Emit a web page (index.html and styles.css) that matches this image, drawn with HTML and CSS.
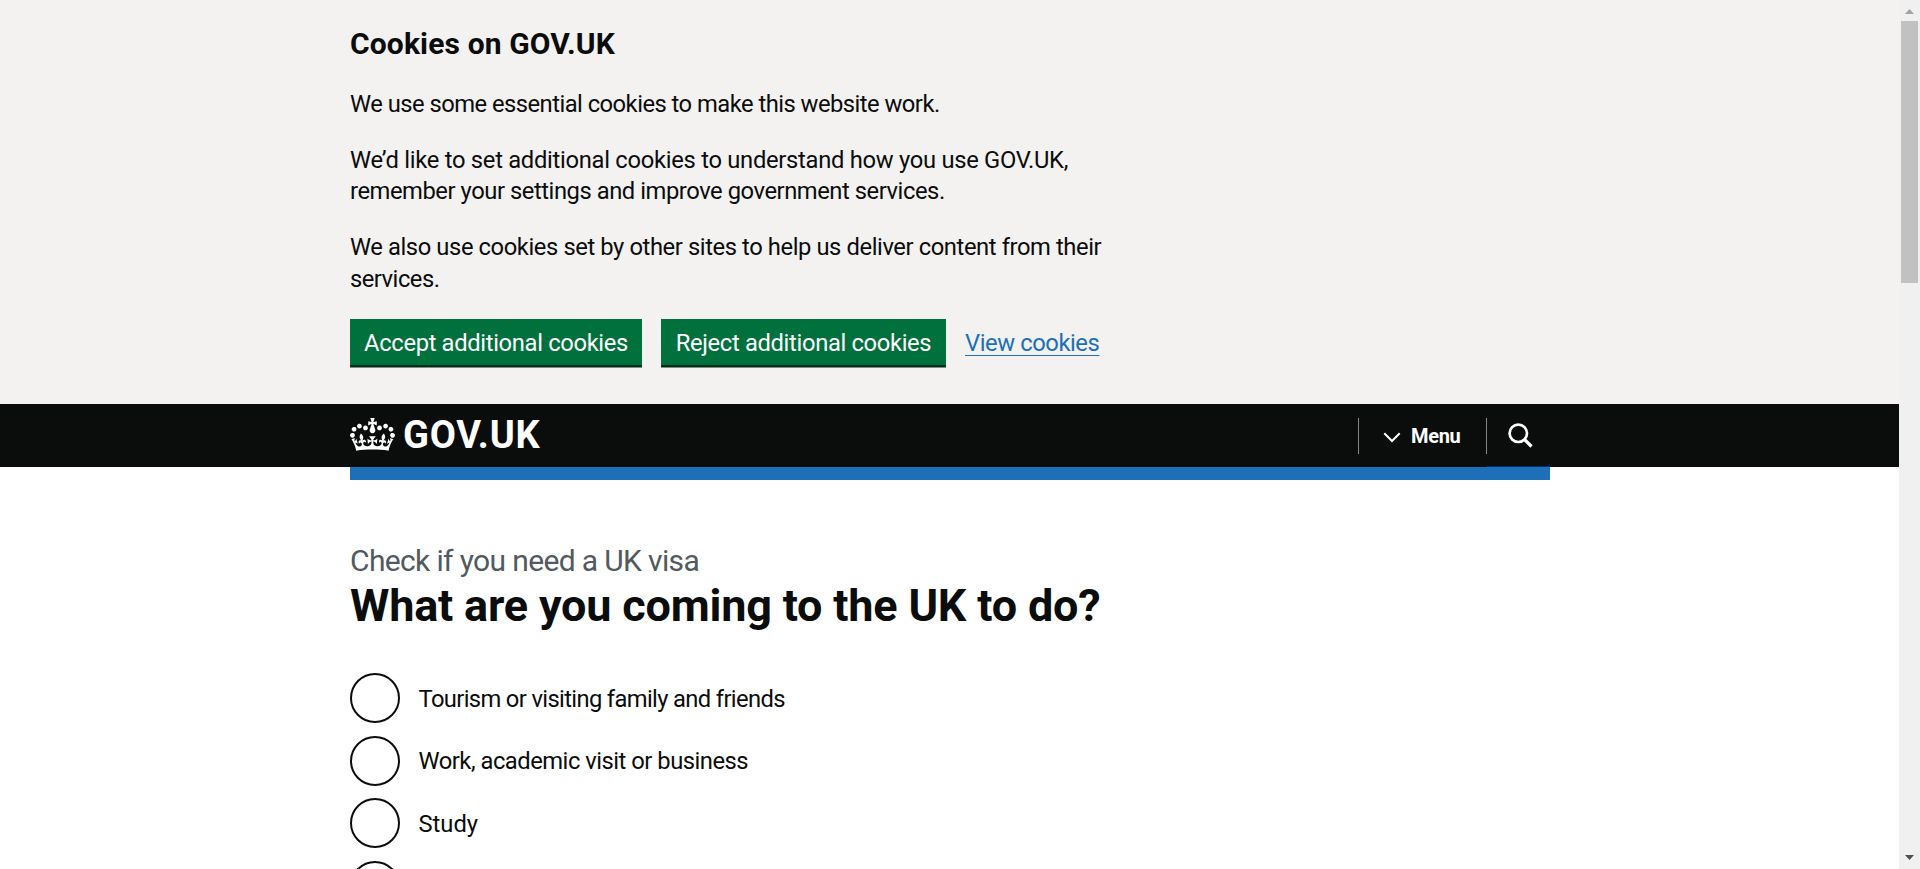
FILE: index.html
```html
<!DOCTYPE html>
<html lang="en">
<head>
<meta charset="utf-8">
<title>What are you coming to the UK to do? - GOV.UK</title>
<link rel="stylesheet" href="styles.css">
</head>
<body>
<div class="viewport">
  <div class="page">
    <section class="cookie-banner">
      <div class="container">
        <h2 class="cookie-title"><span class="t-title">Cookies on GOV.UK</span></h2>
        <p class="body"><span class="t-1">We use some essential cookies to make this website work.</span></p>
        <p class="body"><span class="t-2">We’d like to set additional cookies to understand how you use GOV.UK,</span><br><span class="t-3">remember your settings and improve government services.</span></p>
        <p class="body"><span class="t-4">We also use cookies set by other sites to help us deliver content from their</span><br><span class="t-5">services.</span></p>
        <div class="button-group">
          <button class="button accept">Accept additional cookies</button>
          <button class="button reject">Reject additional cookies</button>
          <a class="link">View cookies</a>
        </div>
      </div>
    </section>
    <header class="header">
      <div class="container header-row">
        <a class="logo">
          <svg class="crown" viewBox="0 0 132 97" fill="currentColor"><path fill-rule="evenodd" d="M25 30.2c3.5 1.5 7.7-.2 9.1-3.7 1.5-3.6-.2-7.8-3.9-9.2-3.6-1.4-7.6.3-9.1 3.9-1.4 3.5.3 7.5 3.9 9zM9 39.5c3.6 1.5 7.8-.2 9.2-3.7 1.5-3.6-.2-7.8-3.9-9.1-3.6-1.5-7.6.2-9.1 3.8-1.4 3.5.3 7.5 3.8 9zM4.4 57.2c3.5 1.5 7.7-.2 9.1-3.8 1.5-3.6-.2-7.7-3.9-9.1-3.5-1.5-7.6.3-9.1 3.8-1.4 3.5.3 7.6 3.9 9.1zm38.3-21.4c3.5 1.5 7.7-.2 9.1-3.8 1.5-3.6-.2-7.7-3.9-9.1-3.6-1.5-7.6.3-9.1 3.8-1.3 3.6.4 7.7 3.9 9.1zm64.4-5.6c-3.6 1.5-7.8-.2-9.1-3.7-1.5-3.6.2-7.8 3.8-9.2 3.6-1.4 7.7.3 9.2 3.9 1.3 3.5-.4 7.5-3.9 9zm15.9 9.3c-3.6 1.5-7.7-.2-9.1-3.7-1.5-3.6.2-7.8 3.7-9.1 3.6-1.5 7.7.2 9.2 3.8 1.5 3.5-.3 7.5-3.8 9zm4.7 17.7c-3.6 1.5-7.8-.2-9.2-3.8-1.5-3.6.2-7.7 3.9-9.1 3.6-1.5 7.7.3 9.2 3.8 1.3 3.5-.4 7.6-3.9 9.1zM89.3 35.8c-3.6 1.5-7.8-.2-9.2-3.8-1.4-3.6.2-7.7 3.9-9.1 3.6-1.5 7.7.3 9.2 3.8 1.4 3.6-.3 7.7-3.9 9.1zM69.7 17.7l8.9 4.7V9.3l-8.9 2.8c-.2-.3-.5-.6-.9-.9L72.4 0H59.6l3.5 11.2c-.3.3-.6.5-.9.9l-8.8-2.8v13.1l8.8-4.7c.3.3.6.7.9.9l-5 15.4v.1c-.2.8-.4 1.6-.4 2.4 0 4.1 3.1 7.5 7 8.1h.2c.3 0 .7.1 1 .1.4 0 .7 0 1-.1h.2c4-.6 7.1-4.1 7.1-8.1 0-.8-.1-1.7-.4-2.4V34l-5.1-15.4c.4-.2.7-.6 1-.9zM66 92.8c16.9 0 32.8 1.1 47.1 3.2 4-16.9 8.9-26.7 14-33.5l-9.6-3.4c1 4.9 1.1 7.2 0 10.2-1.5-1.4-3-4.3-4.2-8.7L108.6 76c2.8-2 5-3.2 7.5-3.3-4.4 9.4-10 11.9-13.6 11.2-4.3-.8-6.3-4.6-5.6-7.9 1-4.7 5.7-5.9 8-.5 4.3-8.7-3-11.4-7.6-8.8 7.1-7.2 7.9-13.5 2.1-21.1-8 6.1-8.1 12.3-4.5 20.8-4.7-5.4-12.1-2.5-9.5 6.2 3.4-5.2 7.9-2 7.2 3.1-.6 4.3-6.4 7.8-13.5 7.2-10.3-.9-10.9-8-11.2-13.8 2.5-.5 7.1 1.8 11 7.3L80.2 60c-4.1 4.4-8 5.3-12.3 5.4 1.4-4.4 8-11.6 8-11.6H55.5s6.4 7.2 7.9 11.6c-4.2-.1-8-1-12.3-5.4l1.4 16.4c3.9-5.5 8.5-7.7 10.9-7.3-.3 5.8-.9 12.8-11.1 13.8-7.2.6-12.9-2.9-13.5-7.2-.7-5 3.8-8.3 7.1-3.1 2.7-8.7-4.6-11.6-9.4-6.2 3.7-8.5 3.6-14.7-4.6-20.8-5.8 7.6-5 13.9 2.2 21.1-4.7-2.6-11.9.1-7.7 8.8 2.3-5.5 7.1-4.2 8.1.5.7 3.3-1.3 7.1-5.7 7.9-3.5.7-9-1.8-13.5-11.2 2.5.1 4.7 1.3 7.5 3.3l-4.7-15.4c-1.2 4.4-2.7 7.2-4.3 8.7-1.1-3-.9-5.3 0-10.2l-9.5 3.4c5 6.9 9.9 16.7 14 33.5 14.8-2.1 30.8-3.2 47.7-3.2z"/></svg>
          <span class="logotype">GOV.UK</span>
        </a>
        <nav class="nav">
          <a class="menu"><svg class="chevron" viewBox="0 0 18 11"><path d="M1.3 1.3 9 9l7.700-7.700" fill="none" stroke="currentColor" stroke-width="2"/></svg><span class="menu-label">Menu</span></a>
          <div class="search-cell">
            <a class="search"><svg class="search-icon" viewBox="0 0 25 25"><circle cx="10.300" cy="10.300" r="8.700" fill="none" stroke="currentColor" stroke-width="2.700"/><path d="m16.500 16.500 7 7" stroke="currentColor" stroke-width="3.200"/></svg></a>
            <div class="search-edge"></div>
          </div>
        </nav>
      </div>
    </header>
    <div class="container"><div class="blue-bar"></div></div>
    <main class="container main">
      <span class="caption"><span class="t-caption">Check if you need a UK visa</span></span>
      <h1 class="heading"><span class="t-heading">What are you coming to the UK to do?</span></h1>
      <div class="radios">
        <label class="radio"><span class="circle"></span><span class="label t-r1">Tourism or visiting family and friends</span></label>
        <label class="radio"><span class="circle"></span><span class="label t-r2">Work, academic visit or business</span></label>
        <label class="radio"><span class="circle"></span><span class="label t-r3">Study</span></label>
        <label class="radio"><span class="circle"></span></label>
      </div>
    </main>
  </div>
  <div class="scrollbar">
    <svg class="arrow" viewBox="0 0 9 5"><path d="M0 5 4.500 0 9 5z" fill="#a3a3a3"/></svg>
    <div class="thumb"></div>
    <svg class="arrow down" viewBox="0 0 9 5"><path d="M0 0h9L4.500 5z" fill="#505050"/></svg>
  </div>
</div>
</body>
</html>
```

FILE: styles.css
```css
* { box-sizing: border-box; }
body {
  margin: 0;
  overflow: hidden;
  background: #fff;
  color: #0b0c0c;
  font-family: Roboto, "Liberation Sans", sans-serif;
  font-size: 23.75px;
  line-height: 31.25px;
  white-space: nowrap;
}
.viewport { display: flex; height: 869px; overflow: hidden; }
.page { flex: 1; height: 869px; overflow: hidden; }
.container { width: 1200px; margin: 0 auto 0 350px; }

.cookie-banner { height: 404px; padding-top: 25px; background: #f3f2f1; }
.cookie-title { margin: 0 0 26px; font-size: 30px; line-height: 37.5px; font-weight: 700; }
.body { margin: 0 0 25px; }
.button-group { display: flex; align-items: flex-start; margin-top: -1px; }
.button {
  height: 46px;
  margin: 0 19px 0 0;
  padding: 2px 0 0;
  border: 0;
  background: #00703c;
  box-shadow: 0 2.5px 0 #002d18;
  color: #fff;
  font: inherit;
  line-height: 44px;
  letter-spacing: -0.34px;
  text-align: center;
}
.accept { width: 292px; }
.reject { width: 285px; }
.link {
  margin-top: 9px;
  color: #1d70b8;
  letter-spacing: -0.42px;
  text-decoration: underline;
  text-decoration-thickness: 1px;
  text-underline-offset: 4px;
}

/* Tracking per line */
.t-title { letter-spacing: 0.14px; }
.t-1 { letter-spacing: -0.52px; }
.t-2 { letter-spacing: -0.285px; }
.t-3 { letter-spacing: -0.445px; }
.t-4 { letter-spacing: -0.405px; }
.t-5 { letter-spacing: -0.5px; }
.t-caption { letter-spacing: -0.64px; }
.t-heading { letter-spacing: -0.2px; }
.t-r1 { letter-spacing: -0.64px; }
.t-r2 { letter-spacing: -0.49px; }

.header { height: 63px; background: #0b0c0c; color: #fff; }
.header-row { display: flex; justify-content: space-between; }
.logo { display: flex; padding-top: 14px; }
.crown { width: 45px; height: 33px; margin-right: 8px; }
.logotype { font-size: 38px; font-weight: 700; line-height: 34px; letter-spacing: 0.8px; }
.nav { display: flex; }
.menu, .search { display: flex; height: 36px; margin-top: 14px; border-left: 1px solid #81868a; }
.menu { width: 128px; padding-left: 24px; }
.chevron { width: 18px; height: 11px; margin-top: 14px; }
.menu-label { margin-left: 10px; font-size: 20px; font-weight: 700; line-height: 36px; letter-spacing: -0.3px; }
.search { width: 64px; padding-left: 21px; }
.search-icon { width: 25px; height: 25px; margin-top: 5px; }
.search-edge { height: 1px; margin: 12px 0 0 1px; background: #003078; }
.blue-bar { height: 13px; background: #1d70b8; }

.main { padding-top: 62px; }
.caption { display: block; color: #505a5f; font-size: 30px; line-height: 37.5px; }
.heading { margin: 0 0 42.5px; padding-top: 1px; font-size: 45px; line-height: 50px; font-weight: 700; }
.radio { display: flex; align-items: center; height: 50px; margin-bottom: 12.5px; }
.circle { width: 50px; height: 50px; margin-right: 18.5px; border: 2.5px solid #0b0c0c; border-radius: 50%; }
.label { padding-top: 3px; }

.scrollbar { display: flex; flex-direction: column; width: 21px; height: 869px; padding: 9px 2px 9px; background: #f0f0f0; }
.arrow { width: 9px; height: 5px; margin: 0 auto; }
.thumb { height: 262px; margin-top: 7px; background: #c1c1c1; }
.down { margin-top: auto; }
```
